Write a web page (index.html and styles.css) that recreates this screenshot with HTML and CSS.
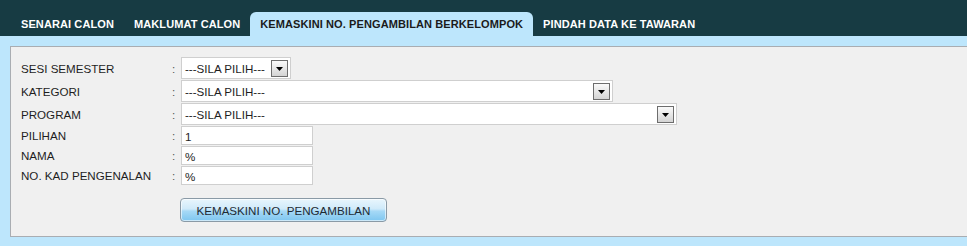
FILE: index.html
```html
<!DOCTYPE html>
<html>
<head>
<meta charset="utf-8">
<link rel="stylesheet" href="styles.css">
</head>
<body>
<div class="page">
  <ul class="tabs">
    <li class="tab">SENARAI CALON</li>
    <li class="tab">MAKLUMAT CALON</li>
    <li class="tab active">KEMASKINI NO. PENGAMBILAN BERKELOMPOK</li>
    <li class="tab">PINDAH DATA KE TAWARAN</li>
  </ul>
  <div class="band">
    <div class="panel">
      <div class="form">
        <div class="label">SESI SEMESTER</div><div class="colon">:</div>
        <div class="field"><div class="combo w-sesi"><span class="combo-text">---SILA PILIH---</span><span class="arrow"><svg width="7" height="4" viewBox="0 0 7 4"><path d="M0 0H7L3.5 4Z" fill="#000"/></svg></span></div></div>

        <div class="label">KATEGORI</div><div class="colon">:</div>
        <div class="field"><div class="combo w-kat"><span class="combo-text">---SILA PILIH---</span><span class="arrow"><svg width="7" height="4" viewBox="0 0 7 4"><path d="M0 0H7L3.5 4Z" fill="#000"/></svg></span></div></div>

        <div class="label">PROGRAM</div><div class="colon">:</div>
        <div class="field"><div class="combo w-prog"><span class="combo-text">---SILA PILIH---</span><span class="arrow"><svg width="7" height="4" viewBox="0 0 7 4"><path d="M0 0H7L3.5 4Z" fill="#000"/></svg></span></div></div>

        <div class="label">PILIHAN</div><div class="colon">:</div>
        <div class="field"><input class="text" type="text" value="1"></div>

        <div class="label">NAMA</div><div class="colon">:</div>
        <div class="field"><input class="text" type="text" value="%"></div>

        <div class="label">NO. KAD PENGENALAN</div><div class="colon">:</div>
        <div class="field"><input class="text" type="text" value="%"></div>

        <div class="label"></div><div class="colon"></div>
        <div class="field"><button class="btn" type="button">KEMASKINI NO. PENGAMBILAN</button></div>
      </div>
    </div>
  </div>
</div>
</body>
</html>
```
FILE: styles.css
```css
html, body {
  margin: 0;
  padding: 0;
  background: #bde6fc;
  overflow: hidden;
}
.page {
  width: 967px;
  height: 246px;
  overflow: hidden;
  font-family: "Liberation Sans", Arial, sans-serif;
}
.tabs {
  list-style: none;
  margin: 0;
  padding: 12px 0 0 11px;
  height: 24px;
  background: #173b43;
  display: flex;
  align-items: flex-end;
}
.tab {
  height: 24px;
  line-height: 25px;
  padding: 0 10px;
  font-size: 11px;
  font-weight: bold;
  letter-spacing: 0.1px;
  color: #ffffff;
  white-space: nowrap;
}
.tab.active {
  background: #bde6fc;
  color: #1b1b1b;
  border-radius: 6px 6px 0 0;
}
.band {
  padding-top: 10px;
  padding-left: 10px;
}
.panel {
  background: #f0f0f0;
  border: 1px solid #a9adb2;
  border-right: none;
  height: 191px;
  box-sizing: border-box;
  padding: 10px 0 0 10px;
  margin-right: -10px;
}
.form {
  display: grid;
  grid-template-columns: 151px 9px auto;
  row-gap: 1px;
  align-items: center;
  font-size: 11.6px;
  color: #1e1e1e;
}
.label {
  white-space: nowrap;
}
.colon {
  color: #555;
}
.combo {
  height: 22px;
  box-sizing: border-box;
  background: #fff;
  border: 1px solid #cfcfcf;
  display: flex;
  align-items: center;
  justify-content: space-between;
  padding: 0 2px 0 3px;
}
.w-sesi { width: 110px; }
.w-kat { width: 432px; }
.w-prog { width: 496px; }
.combo-text {
  white-space: nowrap;
}
.arrow {
  width: 17px;
  height: 17px;
  box-sizing: border-box;
  border: 1px solid #6d6d6d;
  background: linear-gradient(#fafafa, #d4d4d4);
  display: flex;
  align-items: center;
  justify-content: center;
}
.arrow svg {
  display: block;
  margin-top: 1px;
}
.text {
  display: block;
  width: 132px;
  height: 19px;
  box-sizing: border-box;
  margin: 0;
  border: 1px solid #cfcfcf;
  background: #fff;
  padding: 2px 3px 0;
  font-family: "Liberation Sans", Arial, sans-serif;
  font-size: 11.6px;
  color: #1e1e1e;
  outline: none;
}
.btn {
  display: block;
  margin: 12px 0 0 -1px;
  width: 207px;
  height: 24px;
  border: 1px solid #8a9aa6;
  border-radius: 4px;
  background: linear-gradient(#e9f6fd 0%, #cfeafa 45%, #a6d9f6 55%, #7ec6f0 100%);
  box-shadow: inset 0 0 0 1px rgba(255,255,255,0.6);
  font-family: "Liberation Sans", Arial, sans-serif;
  font-size: 11.6px;
  color: #1e2a33;
  padding: 0;
}
```
